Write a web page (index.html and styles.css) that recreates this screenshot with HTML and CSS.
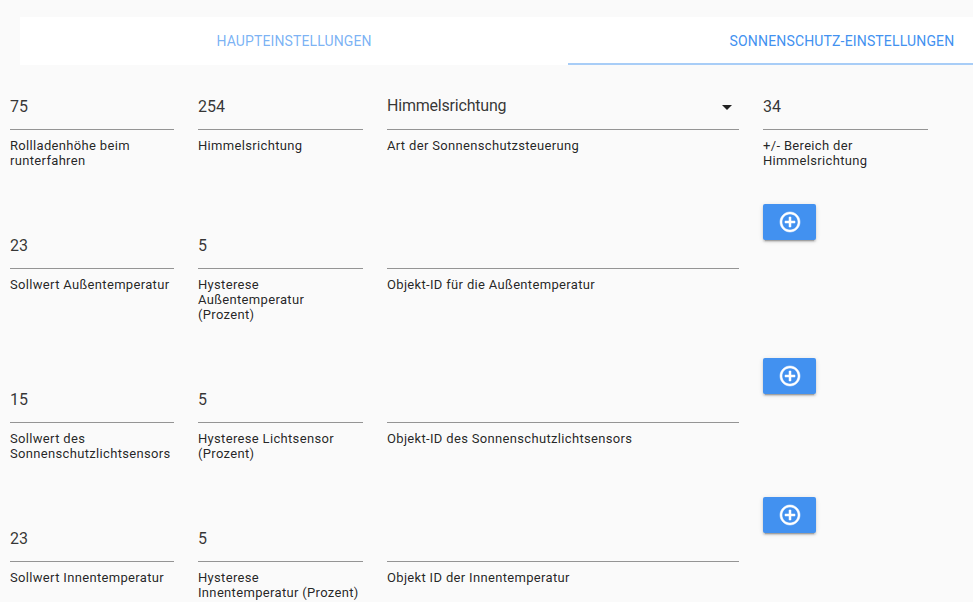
FILE: index.html
```html
<!DOCTYPE html>
<html lang="de">
<head>
<meta charset="utf-8">
<title>Sonnenschutz-Einstellungen</title>
<link rel="stylesheet" href="styles.css">
</head>
<body>
<div class="tabs">
  <div class="tab">HAUPTEINSTELLUNGEN</div>
  <div class="tab active">SONNENSCHUTZ-EINSTELLUNGEN</div>
</div>
<main class="form">
  <section class="row">
    <div class="field"><div class="value">75</div><div class="help">Rollladenhöhe beim runterfahren</div></div>
    <div class="field"><div class="value">254</div><div class="help">Himmelsrichtung</div></div>
    <div class="field"><div class="value select"><span>Himmelsrichtung</span><i class="caret"></i></div><div class="help">Art der Sonnenschutzsteuerung</div></div>
    <div class="field"><div class="value">34</div><div class="help">+/- Bereich der Himmelsrichtung</div></div>
  </section>
  <section class="row">
    <div class="field"><div class="value">23</div><div class="help">Sollwert Außentemperatur</div></div>
    <div class="field"><div class="value">5</div><div class="help">Hysterese Außentemperatur (Prozent)</div></div>
    <div class="field"><div class="value"></div><div class="help">Objekt-ID für die Außentemperatur</div></div>
    <div class="action"><button class="add" type="button"><svg viewBox="0 0 24 24" width="24" height="24"><path class="plus" d="M13 7h-2v4H7v2h4v4h2v-4h4v-2h-4V7zm-1-5C6.48 2 2 6.48 2 12s4.48 10 10 10 10-4.48 10-10S17.52 2 12 2zm0 18c-4.41 0-8-3.59-8-8s3.59-8 8-8 8 3.59 8 8-3.59 8-8 8z"/></svg></button></div>
  </section>
  <section class="row">
    <div class="field"><div class="value">15</div><div class="help">Sollwert des Sonnenschutzlichtsensors</div></div>
    <div class="field"><div class="value">5</div><div class="help">Hysterese Lichtsensor (Prozent)</div></div>
    <div class="field"><div class="value"></div><div class="help">Objekt-ID des Sonnenschutzlichtsensors</div></div>
    <div class="action"><button class="add" type="button"><svg viewBox="0 0 24 24" width="24" height="24"><path class="plus" d="M13 7h-2v4H7v2h4v4h2v-4h4v-2h-4V7zm-1-5C6.48 2 2 6.48 2 12s4.48 10 10 10 10-4.48 10-10S17.52 2 12 2zm0 18c-4.41 0-8-3.59-8-8s3.59-8 8-8 8 3.59 8 8-3.59 8-8 8z"/></svg></button></div>
  </section>
  <section class="row">
    <div class="field"><div class="value">23</div><div class="help">Sollwert Innentemperatur</div></div>
    <div class="field"><div class="value">5</div><div class="help">Hysterese Innentemperatur (Prozent)</div></div>
    <div class="field"><div class="value"></div><div class="help">Objekt ID der Innentemperatur</div></div>
    <div class="action"><button class="add" type="button"><svg viewBox="0 0 24 24" width="24" height="24"><path class="plus" d="M13 7h-2v4H7v2h4v4h2v-4h4v-2h-4V7zm-1-5C6.48 2 2 6.48 2 12s4.48 10 10 10 10-4.48 10-10S17.52 2 12 2zm0 18c-4.41 0-8-3.59-8-8s3.59-8 8-8 8 3.59 8 8-3.59 8-8 8z"/></svg></button></div>
  </section>
</main>
</body>
</html>
```

FILE: styles.css
```css
html, body {
  margin: 0;
  height: 100%;
  overflow: hidden;
  background: #fafafa;
}
body {
  font-family: Roboto, "Liberation Sans", sans-serif;
  color: rgba(0, 0, 0, 0.87);
  padding-top: 17px;
  box-sizing: border-box;
}
.tabs {
  display: flex;
  margin-left: 20px;
  height: 48px;
  background: #fff;
  overflow: hidden;
}
.tab {
  flex: 0 0 548px;
  box-sizing: border-box;
  display: flex;
  align-items: center;
  justify-content: center;
  font-size: 14px;
  letter-spacing: 0.12px;
  color: rgba(66, 145, 240, 0.7);
}
.tab.active {
  color: #4291f0;
  border-bottom: 2px solid #a8cdf7;
  padding-top: 2px;
  letter-spacing: 0.16px;
}
.form {
  padding-left: 10px;
}
.row {
  display: grid;
  grid-template-columns: 164px 165px 352px 165px;
  column-gap: 24px;
  align-items: start;
  padding-bottom: 36px;
}
.row:last-child {
  padding-bottom: 0;
}
.value {
  box-sizing: border-box;
  height: 65px;
  padding-bottom: 10px;
  display: flex;
  align-items: flex-end;
  font-size: 16px;
  line-height: 24px;
  color: rgba(0, 0, 0, 0.8);
  border-bottom: 1px solid #949494;
}
.select {
  justify-content: space-between;
  padding-bottom: 11px;
  letter-spacing: -0.2px;
}
.caret {
  width: 0;
  height: 0;
  margin: 0 7px 8px 0;
  border-left: 5px solid transparent;
  border-right: 5px solid transparent;
  border-top: 5px solid rgba(0, 0, 0, 0.87);
}
.help {
  margin-top: 8px;
  font-size: 13px;
  line-height: 15px;
  letter-spacing: 0.33px;
}
.add {
  display: flex;
  align-items: center;
  justify-content: center;
  width: 53px;
  height: 36px;
  padding: 0;
  border: 0;
  border-radius: 2px;
  background: #4291f0;
  box-shadow: 0 2px 2px rgba(0,0,0,.14), 0 3px 1px -2px rgba(0,0,0,.2), 0 1px 5px rgba(0,0,0,.12);
}
.plus {
  fill: #fff;
  stroke: #fff;
  stroke-width: 0.5;
}
```
